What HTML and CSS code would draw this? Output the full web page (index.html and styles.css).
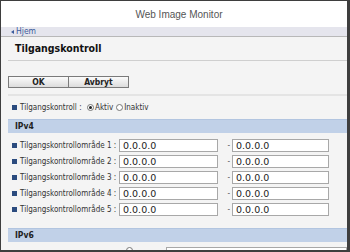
FILE: index.html
```html
<!DOCTYPE html>
<html>
<head>
<meta charset="utf-8">
<link rel="stylesheet" href="styles.css">
</head>
<body>
<div class="frame">
  <header class="top"><span class="brand">Web Image Monitor</span></header>
  <nav class="crumb"><span class="arrow"></span><a class="home">Hjem</a></nav>
  <main class="main">
    <h1 class="title">Tilgangskontroll</h1>
    <div class="buttons"><button class="btn">OK</button><button class="btn btn2">Avbryt</button></div>
    <div class="sep"></div>
    <div class="status">
      <span class="bullet"></span><span class="slabel">Tilgangskontroll :</span>
      <span class="radio"><span class="dot on"></span>Aktiv</span>
      <span class="radio"><span class="dot"></span>Inaktiv</span>
    </div>
    <div class="bar">IPv4</div>
    <div class="ranges">
      <div class="row"><span class="bullet"></span><span class="label">Tilgangskontrollområde 1 :</span><input class="ip" value="0.0.0.0"><span class="dash">-</span><input class="ip ip2" value="0.0.0.0"></div>
      <div class="row"><span class="bullet"></span><span class="label">Tilgangskontrollområde 2 :</span><input class="ip" value="0.0.0.0"><span class="dash">-</span><input class="ip ip2" value="0.0.0.0"></div>
      <div class="row"><span class="bullet"></span><span class="label">Tilgangskontrollområde 3 :</span><input class="ip" value="0.0.0.0"><span class="dash">-</span><input class="ip ip2" value="0.0.0.0"></div>
      <div class="row"><span class="bullet"></span><span class="label">Tilgangskontrollområde 4 :</span><input class="ip" value="0.0.0.0"><span class="dash">-</span><input class="ip ip2" value="0.0.0.0"></div>
      <div class="row"><span class="bullet"></span><span class="label">Tilgangskontrollområde 5 :</span><input class="ip" value="0.0.0.0"><span class="dash">-</span><input class="ip ip2" value="0.0.0.0"></div>
    </div>
    <div class="bar bar6">IPv6</div>
    <div class="partial"><span class="dot pdot"></span><input class="wide" value=""></div>
  </main>
</div>
</body>
</html>
```
FILE: styles.css
```css
html, body {
  margin: 0;
  padding: 0;
  background: #ffffff;
}
.frame {
  width: 350px;
  height: 252px;
  box-sizing: border-box;
  border-top: 1px solid #3e3e3e;
  border-left: 1px solid #3e3e3e;
  border-right: 3px solid #3e3e3e;
  border-bottom: 2px solid #3e3e3e;
  overflow: hidden;
  display: flex;
  flex-direction: column;
  background: #f4f4f4;
  font-family: "DejaVu Sans Condensed", "DejaVu Sans", sans-serif;
  color: #333;
}
.top {
  height: 26px;
  flex: none;
  background: #ffffff;
  display: flex;
  align-items: center;
  justify-content: center;
  padding-left: 10px;
}
.brand {
  font-family: "Liberation Sans", Arial, sans-serif;
  font-size: 10px;
  color: #555;
}
.crumb {
  height: 9px;
  flex: none;
  background: #e5e5ed;
  border-bottom: 1px solid #b8b8b8;
  display: flex;
  align-items: center;
  padding-left: 10px;
}
.arrow {
  width: 0;
  height: 0;
  border-top: 2px solid transparent;
  border-bottom: 2px solid transparent;
  border-right: 3px solid #3a5b9c;
  margin-right: 2px;
}
.home {
  font-size: 8.5px;
  color: #3a5b9c;
  line-height: 9px;
}
.main {
  flex: 1;
  padding-left: 7px;
  display: flex;
  flex-direction: column;
}
.title {
  margin: 0;
  height: 23px;
  line-height: 22px;
  font-size: 10.5px;
  font-weight: bold;
  color: #111;
  padding-left: 7px;
  border-bottom: 1px solid #cfcfcf;
  flex: none;
}
.buttons {
  margin-top: 15px;
  display: flex;
  flex: none;
}
.btn {
  width: 61px;
  height: 12px;
  padding: 0;
  margin: 0;
  box-sizing: border-box;
  border: 1px solid #7a7a7a;
  background: linear-gradient(#fbfbfb, #dcdcdc);
  font-family: "DejaVu Sans Condensed", "DejaVu Sans", sans-serif;
  font-size: 8.5px;
  font-weight: bold;
  color: #222;
  line-height: 10px;
}
.btn2 {
  margin-left: -1px;
}
.sep {
  margin-top: 6px;
  height: 2px;
  background: #e4e4e4;
  flex: none;
}
.status {
  height: 23px;
  display: flex;
  align-items: center;
  font-size: 8px;
  flex: none;
}
.bullet {
  width: 5px;
  height: 5px;
  background: #2b4b7e;
  margin: 0 3px 0 4px;
  flex: none;
}
.slabel {
  width: 67px;
}
.radio {
  display: flex;
  align-items: center;
  margin-right: 3px;
  font-size: 8px;
}
.dot {
  width: 7px;
  height: 7px;
  border: 1px solid #777;
  border-radius: 50%;
  background: #fff;
  margin-right: 1px;
  display: flex;
  align-items: center;
  justify-content: center;
  box-sizing: border-box;
  flex: none;
}
.dot.on::after {
  content: "";
  width: 3px;
  height: 3px;
  border-radius: 50%;
  background: #222;
}
.bar {
  height: 14px;
  box-sizing: border-box;
  background: #c1d1e8;
  border-top: 1px solid #b2c5e0;
  font-size: 8.5px;
  font-weight: bold;
  color: #222;
  line-height: 13px;
  padding-left: 7px;
  flex: none;
}
.ranges {
  padding-top: 4px;
  display: flex;
  flex-direction: column;
  flex: none;
}
.row {
  height: 16px;
  display: flex;
  align-items: center;
}
.label {
  width: 99px;
  font-size: 8px;
  white-space: nowrap;
}
.ip {
  width: 99px;
  height: 13px;
  box-sizing: border-box;
  border: 1px solid #a8a8a8;
  background: #fff;
  padding: 0 0 0 3px;
  margin: 0;
  font-family: "DejaVu Sans", sans-serif;
  font-size: 9.5px;
  color: #222;
  outline: none;
}
.ip2 {
  width: 97px;
}
.dash {
  width: 14px;
  text-align: right;
  padding-right: 2px;
  box-sizing: border-box;
  font-size: 8px;
  color: #555;
}
.bar6 {
  margin-top: 11px;
}
.partial {
  margin-top: 5px;
  display: flex;
  align-items: flex-start;
  padding-left: 118px;
  flex: none;
}
.pdot {
  margin-top: 0;
}
.wide {
  margin-left: 32px;
  width: 200px;
  height: 14px;
  box-sizing: border-box;
  border: 1px solid #a8a8a8;
  background: #fff;
  padding: 0;
}
```
